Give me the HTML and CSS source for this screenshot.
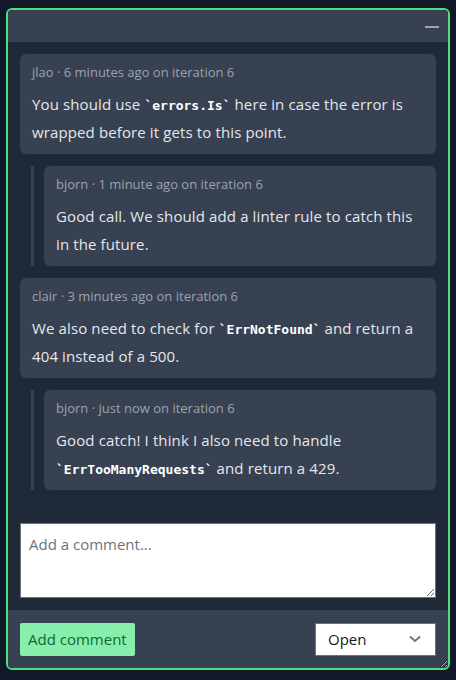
FILE: index.html
```html
<!DOCTYPE html>
<html>
<head>
<meta charset="utf-8">
<link rel="stylesheet" href="styles.css">
</head>
<body>
<div class="panel">
  <div class="header">
    <span class="minimize"></span>
  </div>
  <div class="comments">
    <div class="card">
      <div class="meta">jlao · 6 minutes ago on iteration 6</div>
      <div class="body">You should use <code>`errors.Is`</code> here in case the error is wrapped before it gets to this point.</div>
    </div>
    <div class="reply">
      <div class="card">
        <div class="meta">bjorn · 1 minute ago on iteration 6</div>
        <div class="body">Good call. We should add a linter rule to catch this in the future.</div>
      </div>
    </div>
    <div class="card">
      <div class="meta">clair · 3 minutes ago on iteration 6</div>
      <div class="body">We also need to check for <code>`ErrNotFound`</code> and return a 404 instead of a 500.</div>
    </div>
    <div class="reply">
      <div class="card">
        <div class="meta">bjorn · just now on iteration 6</div>
        <div class="body">Good catch! I think I also need to handle <code>`ErrTooManyRequests`</code> and return a 429.</div>
      </div>
    </div>
  </div>
  <div class="composer">
    <textarea class="input" placeholder="Add a comment..."></textarea>
  </div>
  <div class="footer">
    <button class="add-btn">Add comment</button>
    <div class="select">
      <span>Open</span>
      <svg width="12" height="8" viewBox="0 0 12 8"><path d="M1 1.5 L6 6 L11 1.5" fill="none" stroke="#6b7280" stroke-width="1.8"/></svg>
    </div>
  </div>
</div>
</body>
</html>
```
FILE: styles.css
```css
* { box-sizing: border-box; }
html, body { margin: 0; }
body {
  background: #111827;
  padding: 8px 6px 10px;
  font-family: "Open Sans", "Noto Sans", sans-serif;
}
.panel {
  height: 662px;
  border: 2px solid #4ade80;
  border-radius: 6px;
  background: #1f2937;
  display: flex;
  flex-direction: column;
  overflow: hidden;
  resize: both;
}
.header {
  height: 32px;
  flex: none;
  background: #374151;
  display: flex;
  justify-content: flex-end;
  align-items: center;
  padding-right: 9px;
}
.minimize {
  display: block;
  width: 14px;
  height: 2px;
  background: #9ca3af;
  margin-top: 2px;
}
.comments {
  flex: 1;
  padding: 12px;
  display: flex;
  flex-direction: column;
  gap: 12px;
}
.card {
  background: #374151;
  border-radius: 6px;
  padding: 8px 12px;
}
.meta {
  font-size: 13px;
  line-height: 20px;
  color: #9ca3af;
}
.body {
  margin-top: 8px;
  font-size: 15px;
  line-height: 28px;
  letter-spacing: 0.12px;
  color: #e5e7eb;
}
.body code {
  font-family: "DejaVu Sans Mono", monospace;
  font-weight: bold;
  font-size: 13px;
  line-height: 1;
  letter-spacing: 0;
  color: #ffffff;
}
.reply {
  margin-left: 11px;
  border-left: 3px solid #374151;
  padding-left: 10px;
}
.composer {
  flex: none;
  padding: 12px 12px 12px;
}
.input {
  display: block;
  width: 100%;
  height: 75px;
  border: 1px solid #6b7280;
  border-radius: 0;
  padding: 8px;
  font-family: "Open Sans", "Noto Sans", sans-serif;
  font-size: 15px;
  line-height: 24px;
  color: #111827;
  background: #ffffff;
  resize: both;
}
.input::placeholder { color: #6b7280; }
.footer {
  flex: none;
  height: 58px;
  background: #374151;
  display: flex;
  justify-content: space-between;
  align-items: center;
  padding: 0 12px;
}
.add-btn {
  height: 33px;
  border: none;
  border-radius: 2px;
  background: #86efac;
  color: #166534;
  font-family: "Open Sans", "Noto Sans", sans-serif;
  font-size: 15px;
  padding: 0 8px;
}
.select {
  width: 121px;
  height: 33px;
  background: #ffffff;
  border: 1px solid #6b7280;
  display: flex;
  align-items: center;
  justify-content: space-between;
  padding: 0 14px 0 12px;
  font-size: 15px;
  color: #111827;
}
```
